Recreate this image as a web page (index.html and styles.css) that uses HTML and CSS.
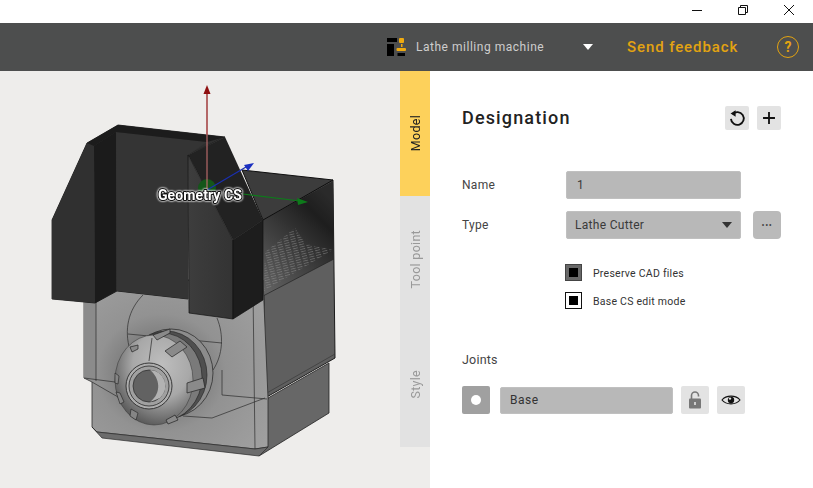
FILE: index.html
```html
<!DOCTYPE html>
<html lang="en">
<head>
<meta charset="utf-8">
<title>Lathe milling machine</title>
<link rel="stylesheet" href="styles.css">
</head>
<body>
<div class="app">
  <div class="titlebar">
    <svg class="win-icon" viewBox="0 0 12 12"><path d="M1 6.5H11" /></svg>
    <svg class="win-icon" viewBox="0 0 12 12"><path d="M1.5 3.5H8.5V10.5H1.5ZM3.5 3.5V1.5H10.5V8.5H8.5" /></svg>
    <svg class="win-icon" viewBox="0 0 12 12"><path d="M1 1L11 11M11 1L1 11" /></svg>
  </div>
  <header class="header">
    <svg class="logo" viewBox="0 0 19 18">
      <rect x="0" y="0" width="10" height="4" fill="#000"/>
      <rect x="0" y="6" width="7" height="12" fill="#000"/>
      <rect x="12" y="0" width="5" height="5" rx="1" fill="#f0ab10"/>
      <rect x="14" y="6" width="1.5" height="3" fill="#f0ab10"/>
      <rect x="9.5" y="10" width="9.5" height="3" rx="1" fill="#f0ab10"/>
      <rect x="10.5" y="15" width="7.5" height="3" fill="#000"/>
    </svg>
    <span class="project">Lathe milling machine</span>
    <span class="caret"></span>
    <span class="feedback">Send feedback</span>
    <span class="help">?</span>
  </header>
  <main class="main">
    <div class="viewport">
      <svg class="model" viewBox="0 0 400 417" width="400" height="417">
        <defs>
          <radialGradient id="chuck" cx="0.6" cy="0.33" r="0.74">
            <stop offset="0" stop-color="#bebebe"/>
            <stop offset="0.5" stop-color="#a8a8a8"/>
            <stop offset="1" stop-color="#4e4e4e"/>
          </radialGradient>
          <radialGradient id="front" cx="0.42" cy="0.55" r="0.7">
            <stop offset="0" stop-color="#5f5f5f"/>
            <stop offset="0.5" stop-color="#929292"/>
            <stop offset="1" stop-color="#a0a0a0"/>
          </radialGradient>
          <linearGradient id="sheen" x1="0.1" y1="1" x2="0.7" y2="0">
            <stop offset="0" stop-color="#626262"/>
            <stop offset="0.45" stop-color="#3c3c3c"/>
            <stop offset="0.8" stop-color="#1e1e1e"/>
            <stop offset="1" stop-color="#2a2a2a"/>
          </linearGradient>
          <linearGradient id="slope" x1="0" y1="0" x2="1" y2="0">
            <stop offset="0" stop-color="#3d3d3d"/>
            <stop offset="1" stop-color="#333"/>
          </linearGradient>
          <pattern id="streaks" width="7" height="2.4" patternUnits="userSpaceOnUse" patternTransform="rotate(-14)">
            <rect width="5" height=".9" fill="#959595"/>
          </pattern>
        </defs>
        <g transform="translate(0,-71)" stroke-linejoin="round">
          <!-- lower block -->
          <path d="M268 398L329 363V413L259 456L255 449Z" fill="#676767" stroke="#222" stroke-width=".8"/>
          <!-- upper right side -->
          <path d="M263 220L333 180L335 358L265 398Z" fill="#5f5f5f" stroke="#1c1c1c" stroke-width="1"/>
          <path d="M263 220L333 181L334 259L263 296Z" fill="url(#sheen)"/>
          <path d="M265 252L295 228L306 244L333 250L264 291Z" fill="url(#streaks)" opacity=".5"/>
          <path d="M263 296L334 259" stroke="#222" stroke-width=".7"/>
          <path d="M265 394L335 354" stroke="#333" stroke-width=".6"/>
          <path d="M242 170L333 180L263 220Z" fill="#3c3c3c" stroke="#0f0f0f" stroke-width="1"/>
          <!-- front -->
          <path d="M84 280H263L268 398V447L255 449L97 432L92 427V382L84 378Z" fill="url(#front)" stroke="#2c2c2c" stroke-width=".8"/>
          <path d="M84 280H96V380L84 378Z" fill="#8b8b8b"/>
          <path d="M92 427L97 432L255 449L268 447L259 456L102 438Z" fill="#6c6c6c" stroke="#2c2c2c" stroke-width=".7"/>
          <path d="M96 280V381M253 290L255 449M84 378L115 382M92 382L118 397M222 370V395L267 399M183 416L212 418L265 398M128 334L222 343" fill="none" stroke="#2d2d2d" stroke-width=".7"/>
          <path d="M143 295C128 310 124 330 130 350M217 318C224 335 223 355 213 370" fill="none" stroke="#2d2d2d" stroke-width=".7"/>
          <!-- collet -->
          <ellipse cx="171" cy="373" rx="42" ry="44" fill="#8c8c8c" stroke="#222" stroke-width=".7"/>
          <ellipse cx="166" cy="375" rx="41" ry="44" fill="#4f4f4f" stroke="#222" stroke-width=".6"/>
          <ellipse cx="162" cy="377" rx="40" ry="44" fill="#7a7a7a" stroke="#222" stroke-width=".6"/>
          <ellipse cx="154" cy="380" rx="39" ry="45" fill="url(#chuck)" stroke="#333" stroke-width=".5"/>
          <path d="M153 335L170 329V333L157 340ZM130 347L138 345V349L132 352ZM165 351L180 341L187 347L172 357ZM187 383L203 378L205 388L187 393ZM166 420L175 415L178 420L168 424Z" fill="#8a8a8a" stroke="#222" stroke-width=".7"/>
          <path d="M115 373L119 376L118 384L115 383ZM116 392L120 393L124 402L120 404ZM131 409L138 413L136 420L130 416Z" fill="#858585" stroke="#222" stroke-width=".6"/>
          <path d="M152 338L149 361" fill="none" stroke="#2a2a2a" stroke-width=".7"/>
          <circle cx="149" cy="386" r="23" fill="#adadad" stroke="#2a2a2a" stroke-width=".9"/>
          <circle cx="149" cy="386" r="20" fill="#a0a0a0" stroke="#2a2a2a" stroke-width=".8"/>
          <circle cx="149" cy="386" r="16" fill="#626262" stroke="#2a2a2a" stroke-width=".7"/>
          <path d="M150 370A16 16 0 0 1 160 398L150 402C162 393 160 378 150 370Z" fill="#b2b2b2"/>
          <!-- jaws -->
          <path d="M52 220L87 143L118 125L225 137L188 155V299L117 291L95 303L52 299Z" fill="#2f2f2f" stroke="#111" stroke-width=".8"/>
          <path d="M94 146L116 132V291L95 303Z" fill="#1b1b1b"/>
          <path d="M52 220L87 143L94 146L95 303L52 299Z" fill="#303030"/>
          <path d="M116 132L207 142L188 155V299L117 291Z" fill="#343434"/>
          <path d="M87 143L118 125L225 137L207 142L116 132L94 146Z" fill="#1c1c1c"/>
          <path d="M188 155L225 137L263 220L233 240Z" fill="#222"/>
          <path d="M188 155L233 240V319L189 313Z" fill="url(#slope)" stroke="#111" stroke-width=".7"/>
          <path d="M233 240L263 220V300L233 319Z" fill="#1d1d1d" stroke="#111" stroke-width=".7"/>
          <!-- axes -->
          <circle cx="207" cy="188" r="9" fill="#14561a"/>
          <path d="M207 190L207 90" stroke="#b86a6a" stroke-width="1.2"/>
          <path d="M207 135L207 90" stroke="#a34444" stroke-width="1.2"/>
          <path d="M207 85L203.5 94H210.5Z" fill="#8e0f0f"/>
          <path d="M207 190L246 167" stroke="#1a2fb0" stroke-width="1.2"/>
          <path d="M254 163L244 165L248 171Z" fill="#1a2fc0"/>
          <path d="M243 194L300 201" stroke="#0e7a1b" stroke-width="1.2"/>
          <path d="M308 202L297 198L298 205Z" fill="#0e7a1b"/>
          <text x="200" y="200" class="cs-label" text-anchor="middle">Geometry CS</text>
        </g>
      </svg>
    </div>
    <nav class="tabs">
      <div class="tab tab-active"><span>Model</span></div>
      <div class="tab"><span>Tool point</span></div>
      <div class="tab"><span>Style</span></div>
    </nav>
    <section class="panel">
      <div class="panel-head">
        <h1>Designation</h1>
        <div class="head-actions">
          <button class="btn-light"><svg viewBox="0 0 24 24" class="ico"><path d="M7.2 7.8A7 7 0 1 1 5.4 13" fill="none" stroke="#111" stroke-width="2"/><path d="M10.5 3.5V10.5L5 7Z" fill="#111"/></svg></button>
          <button class="btn-light"><svg viewBox="0 0 24 24" class="ico"><path d="M12 5.5V18.5M5.5 12H18.5" stroke="#111" stroke-width="2"/></svg></button>
        </div>
      </div>
      <div class="field">
        <label>Name</label>
        <div class="input">1</div>
      </div>
      <div class="field field-type">
        <label>Type</label>
        <div class="input select">Lathe Cutter<i class="select-caret"></i></div>
        <button class="btn-more">•••</button>
      </div>
      <div class="checks">
        <div class="check"><span class="box box-grey"></span><span class="check-text">Preserve CAD files</span></div>
        <div class="check"><span class="box"></span><span class="check-text">Base CS edit mode</span></div>
      </div>
      <div class="joints-title">Joints</div>
      <div class="joint">
        <button class="btn-dot"><span></span></button>
        <div class="input joint-name">Base</div>
        <button class="btn-icon"><svg viewBox="0 0 14 18" class="lock"><path d="M3.5 8V4.5A3.5 3.5 0 0 1 10.5 4.5V5.5" fill="none" stroke="#777" stroke-width="1.6"/><rect x="1" y="7.5" width="12" height="10" rx="1" fill="#777"/><rect x="6.2" y="11" width="1.6" height="3" fill="#e3e3e3"/></svg></button>
        <button class="btn-icon"><svg viewBox="0 0 20 12" class="eye"><path d="M1 6C5 .8 15 .8 19 6C15 11.2 5 11.2 1 6Z" fill="none" stroke="#111" stroke-width="1.1"/><circle cx="10" cy="6" r="3.2" fill="#111"/><circle cx="9" cy="4.6" r="1.2" fill="#e3e3e3"/></svg></button>
      </div>
    </section>
  </main>
</div>
</body>
</html>
```
FILE: styles.css
```css
* { box-sizing: border-box; }
html, body { margin: 0; padding: 0; }
body { width: 813px; height: 488px; overflow: hidden; font-family: Roboto, "Liberation Sans", sans-serif; background: #fff; color: #333; }
.app { display: flex; flex-direction: column; width: 813px; height: 488px; }
.titlebar { flex: none; height: 23px; display: flex; justify-content: flex-end; align-items: center; gap: 34px; padding: 0 18px 3px 0; background: #fff; }
.win-icon { width: 12px; height: 12px; fill: none; stroke: #111; stroke-width: 1; }
.header { flex: none; height: 48px; display: flex; align-items: center; background: #4d4e4e; padding-left: 387px; }
.logo { width: 19px; height: 18px; flex: none; }
.project { margin-left: 10px; width: 167px; font-size: 12px; letter-spacing: .52px; color: #cdcdcd; }
.caret { width: 0; height: 0; border-left: 5px solid transparent; border-right: 5px solid transparent; border-top: 6px solid #fff; }
.feedback { margin-left: 34px; width: 150px; flex: none; font-size: 15px; font-weight: 500; letter-spacing: .9px; color: #e3a311; }
.help { width: 22px; height: 22px; border: 1.5px solid #e3a311; border-radius: 50%; color: #e3a311; font-size: 14px; font-weight: 700; display: flex; align-items: center; justify-content: center; }
.main { flex: 1; display: flex; min-height: 0; }
.viewport { flex: none; width: 400px; background: #eeedeb; }
.model { display: block; }
.cs-label { font-family: Roboto, "Liberation Sans", sans-serif; font-size: 14px; font-weight: 700; fill: #fff; stroke: #111; stroke-width: 2.2px; paint-order: stroke; letter-spacing: .1px; filter: drop-shadow(0 0 1px #eee) drop-shadow(0 0 .5px #eee); }
.tabs { flex: none; width: 30px; background: #eeedeb; display: flex; flex-direction: column; }
.tab { height: 125.5px; background: #e2e2e2; display: flex; align-items: center; justify-content: center; color: #999; font-size: 12.5px; letter-spacing: .3px; }
.tab span { writing-mode: vertical-rl; transform: rotate(180deg); }
.tab-active { height: 125px; background: #fdd15b; color: #222; }
.panel { flex: 1; background: #fff; padding: 35px 32px 0; }
.panel-head { display: flex; justify-content: space-between; align-items: center; height: 24px; }
.panel-head h1 { margin: 0 0 2px; font-size: 18px; font-weight: 500; letter-spacing: 1.15px; color: #222; }
.head-actions { display: flex; gap: 8px; }
button { border: 0; padding: 0; margin: 0; display: flex; align-items: center; justify-content: center; font-family: inherit; }
.btn-light { width: 24px; height: 24px; background: #e3e3e3; border-radius: 2px; }
.ico { width: 22px; height: 22px; }
.field { display: flex; align-items: center; height: 28px; margin-top: 41px; font-size: 12px; }
.field-type { margin-top: 12px; }
.field label { width: 104px; letter-spacing: .3px; color: #444; }
.input { width: 175px; height: 28px; border-radius: 2px; background: #b8b8b8; border: 1px solid #c0c0c0; display: flex; align-items: center; padding-left: 10px; font-size: 12px; letter-spacing: .3px; color: #3a3a3a; }
.select { position: relative; padding-left: 8px; }
.select-caret { position: absolute; right: 8px; top: 10px; width: 0; height: 0; border-left: 5px solid transparent; border-right: 5px solid transparent; border-top: 6px solid #333; }
.btn-more { width: 28px; height: 28px; margin-left: 12px; border-radius: 4px; background: #bababa; font-size: 9px; letter-spacing: .6px; color: #444; }
.checks { margin: 25px 0 0 103px; display: flex; flex-direction: column; gap: 11px; }
.check { display: flex; align-items: center; height: 17px; font-size: 10.5px; letter-spacing: .25px; color: #333; }
.check-text { margin-top: 2px; }
.box { width: 17px; height: 17px; margin-right: 11px; border: 1.5px solid #111; background: #fff; display: flex; align-items: center; justify-content: center; }
.box::after { content: ""; width: 9px; height: 9px; background: #000; }
.box-grey { background: #686868; border-color: #444; }
.joints-title { margin-top: 43px; font-size: 12.5px; letter-spacing: .2px; color: #444; height: 16px; line-height: 16px; }
.joint { display: flex; align-items: center; margin-top: 18px; height: 28px; }
.btn-dot { width: 28px; height: 28px; border-radius: 2px; background: #a0a0a0; margin-right: 10px; }
.btn-dot span { width: 10px; height: 10px; border-radius: 50%; background: #fff; }
.joint-name { width: 173px; height: 27px; margin-right: 8px; padding-left: 9px; letter-spacing: .5px; color: #333; }
.btn-icon { width: 28px; height: 28px; border-radius: 2px; background: #e3e3e3; margin-right: 8px; }
.lock { width: 14px; height: 18px; }
.eye { width: 20px; height: 12px; }
```
